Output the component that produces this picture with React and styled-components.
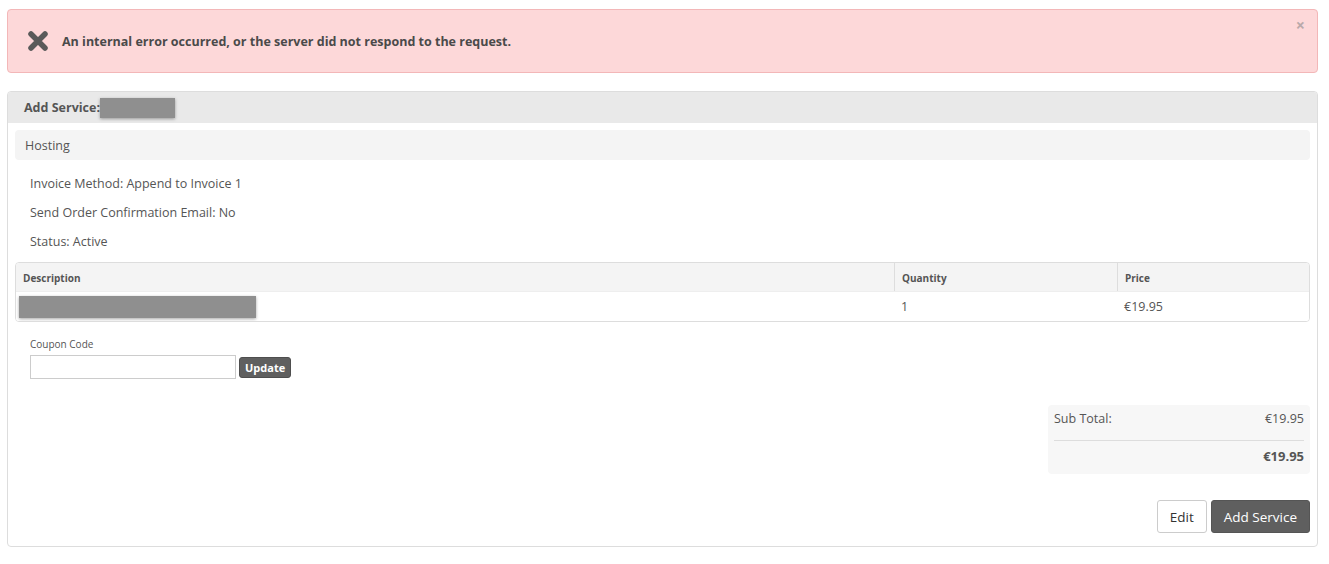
import React from 'react'
import styled, { createGlobalStyle } from 'styled-components'

const GlobalStyle = createGlobalStyle`
  body {
    margin: 0;
    background: #fff;
    font-family: "Open Sans", "Liberation Sans", sans-serif;
    color: #555;
  }
`

const Page = styled.div`
  padding: 9px 11px 0 7px;
`

const Alert = styled.div`
  position: relative;
  height: 64px;
  box-sizing: border-box;
  background: #fdd8d9;
  border: 1px solid #f3b7b8;
  border-radius: 4px;
  display: flex;
  align-items: center;
  padding-left: 19px;
  gap: 13px;
`

const AlertText = styled.span`
  font-size: 12.5px;
  font-weight: 700;
  color: #4a4a4a;
`

const Close = styled.span`
  position: absolute;
  top: 7px;
  right: 12px;
  font-size: 16px;
  font-weight: 700;
  color: #b9a9aa;
  line-height: 1;
`

const Panel = styled.div`
  margin-top: 18px;
  border: 1px solid #ddd;
  border-radius: 4px;
  overflow: hidden;
`

const PanelHeader = styled.div`
  height: 31px;
  background: #e9e9e9;
  display: flex;
  align-items: center;
  padding-left: 16px;
  font-size: 12.5px;
  font-weight: 700;
  color: #555;
`

const Redacted = styled.span`
  display: inline-block;
  width: ${p => p.w}px;
  height: ${p => p.h}px;
  background: #8f8f8f;
  box-shadow: 0 1px 3px rgba(0, 0, 0, 0.35);
`

const PanelBody = styled.div`
  padding: 7px 7px 13px 7px;
`

const SubBar = styled.div`
  height: 30px;
  background: #f4f4f4;
  border-radius: 4px;
  display: flex;
  align-items: center;
  padding-left: 10px;
  font-size: 12.5px;
  color: #555;
`

const InfoList = styled.div`
  padding: 9px 15px 6px;
  display: flex;
  flex-direction: column;
`

const InfoLine = styled.div`
  height: 29px;
  line-height: 29px;
  font-size: 12.5px;
  color: #555;
`

const Table = styled.div`
  border: 1px solid #ddd;
  border-radius: 4px;
  overflow: hidden;
`

const Row = styled.div`
  display: grid;
  grid-template-columns: 1fr 223px 192px;
  height: ${p => (p.head ? 28 : 29)}px;
  background: ${p => (p.head ? '#f4f4f4' : '#fff')};
  border-bottom: ${p => (p.head ? '1px solid #eee' : 'none')};
`

const Cell = styled.div`
  display: flex;
  align-items: center;
  padding-top: ${p => (p.head ? 2 : 0)}px;
  font-size: ${p => (p.head ? '10px' : '12.5px')};
  font-weight: ${p => (p.head ? 700 : 400)};
  color: #555;
  border-left: ${p => (p.head && p.divider ? '1px solid #ddd' : 'none')};
  padding-left: ${p => (p.pad != null ? p.pad : 7)}px;
`

const Coupon = styled.div`
  padding: 15px 15px 0;
`

const Label = styled.div`
  font-size: 10px;
  color: #555;
  margin-bottom: 4px;
`

const CouponRow = styled.div`
  display: flex;
  align-items: center;
  gap: 3px;
`

const Input = styled.input`
  width: 206px;
  height: 24px;
  box-sizing: border-box;
  border: 1px solid #ccc;
  margin: 0;
`

const SmallBtn = styled.button`
  height: 21px;
  padding: 0 5px;
  background: #5f5f5f;
  color: #fff;
  border: 1px solid #4e4e4e;
  border-radius: 3px;
  font-family: inherit;
  font-size: 11px;
  font-weight: 700;
`

const TotalsWrap = styled.div`
  display: flex;
  justify-content: flex-end;
  margin-top: 26px;
`

const Totals = styled.div`
  width: 262px;
  height: 69px;
  box-sizing: border-box;
  background: #f7f7f7;
  border-radius: 4px;
  padding: 0 6px;
`

const TotalLine = styled.div`
  display: flex;
  justify-content: space-between;
  align-items: ${p => (p.strong ? 'center' : 'flex-start')};
  box-sizing: border-box;
  height: ${p => (p.strong ? 33 : 36)}px;
  padding-top: ${p => (p.strong ? 0 : 5)}px;
  padding-bottom: ${p => (p.strong ? 4 : 0)}px;
  font-size: ${p => (p.strong ? '13px' : '12.5px')};
  font-weight: ${p => (p.strong ? 700 : 400)};
  border-bottom: ${p => (p.strong ? 'none' : '1px solid #ddd')};
  color: #555;
`

const Actions = styled.div`
  display: flex;
  justify-content: flex-end;
  gap: 4px;
  margin-top: 26px;
`

const Button = styled.button`
  height: 33px;
  padding: 0 12px;
  border-radius: 3px;
  font-family: inherit;
  font-size: 13.5px;
  background: ${p => (p.primary ? '#5f5f5f' : '#fff')};
  color: ${p => (p.primary ? '#fff' : '#333')};
  border: 1px solid ${p => (p.primary ? '#555' : '#ccc')};
`

const ErrorIcon = () => (
  <svg width="22" height="22" viewBox="0 0 22 22">
    <path d="M4 4 L18 18 M18 4 L4 18" stroke="#5a5a5a" strokeWidth="5.5" strokeLinecap="round" />
  </svg>
)

export default function App() {
  return (
    <Page>
      <GlobalStyle />
      <Alert>
        <ErrorIcon />
        <AlertText>An internal error occurred, or the server did not respond to the request.</AlertText>
        <Close>×</Close>
      </Alert>
      <Panel>
        <PanelHeader>
          Add Service:<Redacted w={75} h={20} />
        </PanelHeader>
        <PanelBody>
          <SubBar>Hosting</SubBar>
          <InfoList>
            <InfoLine>Invoice Method: Append to Invoice 1</InfoLine>
            <InfoLine>Send Order Confirmation Email: No</InfoLine>
            <InfoLine>Status: Active</InfoLine>
          </InfoList>
          <Table>
            <Row head>
              <Cell head>Description</Cell>
              <Cell head divider>Quantity</Cell>
              <Cell head divider>Price</Cell>
            </Row>
            <Row>
              <Cell pad={3}><Redacted w={237} h={22} /></Cell>
              <Cell>1</Cell>
              <Cell>€19.95</Cell>
            </Row>
          </Table>
          <Coupon>
            <Label>Coupon Code</Label>
            <CouponRow>
              <Input type="text" />
              <SmallBtn>Update</SmallBtn>
            </CouponRow>
          </Coupon>
          <TotalsWrap>
            <Totals>
              <TotalLine>
                <span>Sub Total:</span>
                <span>€19.95</span>
              </TotalLine>
              <TotalLine strong>
                <span />
                <span>€19.95</span>
              </TotalLine>
            </Totals>
          </TotalsWrap>
          <Actions>
            <Button>Edit</Button>
            <Button primary>Add Service</Button>
          </Actions>
        </PanelBody>
      </Panel>
    </Page>
  )
}
